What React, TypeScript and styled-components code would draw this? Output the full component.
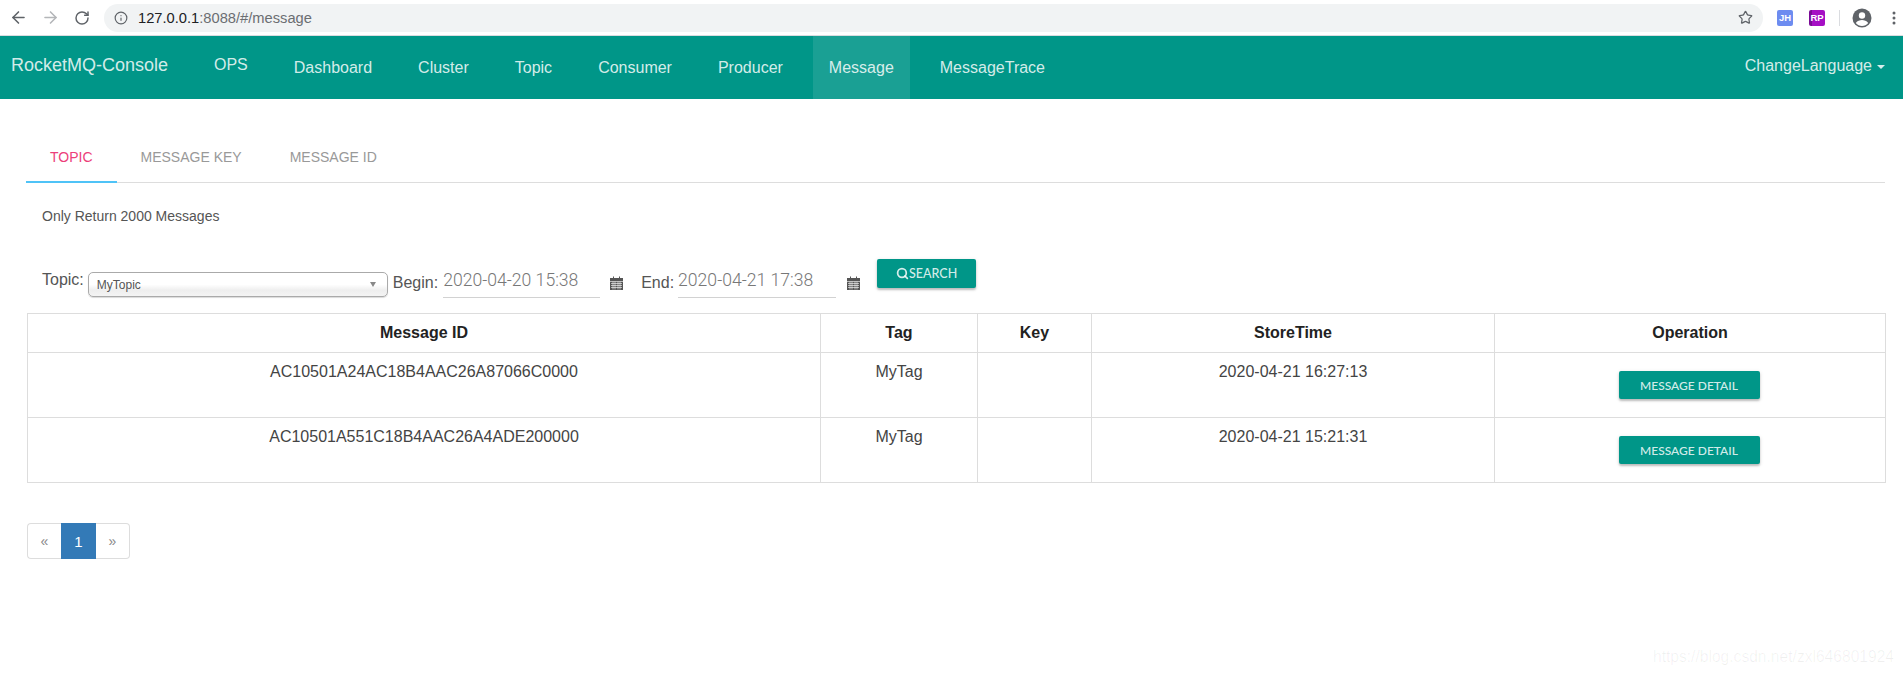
import React from 'react';
import styled, { createGlobalStyle } from 'styled-components';
import { ArrowLeft, ArrowRight, RotateCw, Info, Star, Search } from 'lucide-react';

const GlobalStyle = createGlobalStyle`
  html, body {
    margin: 0;
    padding: 0;
    background: #fff;
    font-family: "Liberation Sans", Arial, sans-serif;
    color: #333;
  }
  * { box-sizing: border-box; }
`;

const Page = styled.div`
  position: relative;
  width: 1903px;
  height: 675px;
  overflow: hidden;
  background: #fff;
`;

const BrowserBar = styled.div`
  display: flex;
  align-items: center;
  height: 36px;
  padding: 0 7px 0 2px;
  border-bottom: 1px solid #dadce0;
`;

const NavIcon = styled.span<{ $muted?: boolean }>`
  display: flex;
  width: 32px;
  justify-content: center;
  color: ${p => (p.$muted ? '#b4b6b9' : '#5f6368')};
`;

const Omnibox = styled.div`
  display: flex;
  align-items: center;
  flex: 1;
  height: 28px;
  margin: 0 14px 0 6px;
  padding: 0 10px;
  border-radius: 14px;
  background: #f1f3f4;
`;

const Url = styled.div`
  flex: 1;
  margin-left: 10px;
  font-size: 14.7px;
  color: #6b6e72;
`;

const UrlHost = styled.span`
  color: #202124;
`;

const Extension = styled.span<{ $bg: string; $gap: number }>`
  display: flex;
  align-items: center;
  justify-content: center;
  width: 16px;
  height: 16px;
  margin-right: ${p => p.$gap}px;
  border-radius: 2px;
  background: ${p => p.$bg};
  color: #fff;
  font-size: 9.5px;
  font-weight: bold;
`;

const BarDivider = styled.span`
  width: 1px;
  height: 16px;
  margin-right: 12px;
  background: #dadce0;
`;

const Avatar = styled.svg`
  display: block;
  margin-right: 20px;
`;

const Navbar = styled.nav`
  display: flex;
  align-items: stretch;
  height: 63px;
  padding-left: 11px;
  background: #009688;
  color: rgba(255, 255, 255, 0.84);
`;

const Brand = styled.div`
  display: flex;
  align-items: center;
  width: 187px;
  padding-bottom: 4px;
  font-size: 18px;
`;

const NavItem = styled.a<{ $active?: boolean; $raised?: boolean }>`
  display: flex;
  align-items: center;
  margin-right: 14px;
  padding: ${p => (p.$raised ? '0 16px 5px' : '0 16px')};
  background: ${p => (p.$active ? 'rgba(255,255,255,0.1)' : 'transparent')};
  font-size: 16px;
`;

const LangMenu = styled.div`
  display: flex;
  align-items: center;
  gap: 5px;
  margin-left: auto;
  padding: 0 18px 4px 0;
  font-size: 16px;
`;

const Caret = styled.span`
  width: 0;
  height: 0;
  margin-top: 2px;
  border-top: 4px solid rgba(255, 255, 255, 0.84);
  border-left: 4px solid transparent;
  border-right: 4px solid transparent;
`;

const Content = styled.main`
  padding: 34px 18px 0 26px;
`;

const Tabs = styled.div`
  display: flex;
  height: 50px;
  border-bottom: 1px solid #ddd;
`;

const Tab = styled.div<{ $active?: boolean }>`
  height: 50px;
  padding: 0 24px;
  line-height: 48px;
  font-size: 14px;
  color: ${p => (p.$active ? '#ec407a' : '#999')};
  border-bottom: 2px solid ${p => (p.$active ? '#4fc3f7' : 'transparent')};
`;

const Note = styled.p`
  margin: 25px 0 0 16px;
  font-size: 14px;
  line-height: 16px;
  color: #555;
`;

const FilterRow = styled.div`
  display: flex;
  align-items: flex-start;
  height: 53px;
  margin-top: 36px;
  padding-left: 16px;
`;

const FieldLabel = styled.span<{ $top: number; $left?: number; $right?: number }>`
  margin: ${p => p.$top}px ${p => p.$right ?? 4}px 0 ${p => p.$left ?? 0}px;
  font-size: 16px;
  line-height: 18px;
  color: #555;
`;

const SelectBox = styled.div`
  display: flex;
  align-items: center;
  justify-content: space-between;
  width: 300px;
  height: 25px;
  margin: 12px 5px 0 0;
  padding: 0 11px 0 8px;
  border: 1px solid #aaa;
  border-radius: 5px;
  background: linear-gradient(#fff 50%, #eee 75%, #f4f4f4);
  box-shadow: 0 1px 1px rgba(0, 0, 0, 0.15);
  font-size: 12px;
  color: #555;
`;

const SelectArrow = styled.span`
  width: 0;
  height: 0;
  border-top: 5px solid #888;
  border-left: 3.5px solid transparent;
  border-right: 3.5px solid transparent;
`;

const DateInput = styled.div<{ $width: number }>`
  width: ${p => p.$width}px;
  height: 33px;
  margin-top: 5px;
  padding-top: 5px;
  border-bottom: 1px solid #d2d2d2;
  font-family: Roboto, sans-serif;
  font-weight: 300;
  font-size: 17.6px;
  line-height: 20px;
  white-space: nowrap;
  color: #777;
`;

const CalendarIcon = styled.svg<{ $gap: number }>`
  display: block;
  flex: none;
  margin: 16px 0 0 ${p => p.$gap}px;
`;

const SearchButton = styled.button`
  display: flex;
  align-items: center;
  justify-content: center;
  width: 99px;
  height: 29px;
  margin: -1px 0 0 17px;
  padding: 0;
  border: 0;
  border-radius: 2px;
  background: #009688;
  color: rgba(255, 255, 255, 0.84);
  font-family: Lato, sans-serif;
  font-size: 12.5px;
  font-weight: 500;
  box-shadow: 0 2px 2px rgba(0, 0, 0, 0.2), 0 1px 4px rgba(0, 0, 0, 0.12);
`;

const Table = styled.table`
  width: 1859px;
  margin-left: 1px;
  border-collapse: collapse;
  table-layout: fixed;
  font-size: 16px;
`;

const Th = styled.th<{ $width?: number }>`
  width: ${p => (p.$width ? `${p.$width}px` : 'auto')};
  height: 39px;
  padding: 0;
  border: 1px solid #ddd;
  font-weight: bold;
  color: #222;
  text-align: center;
`;

const Td = styled.td`
  height: 65px;
  padding: 8px 8px 0;
  border: 1px solid #ddd;
  vertical-align: top;
  text-align: center;
  line-height: 22px;
  color: #444;
`;

const DetailButton = styled.button`
  display: block;
  width: 141px;
  height: 28px;
  margin: 10px auto 0;
  transform: translateX(-1px);
  padding: 0;
  border: 0;
  border-radius: 2px;
  background: #009688;
  color: rgba(255, 255, 255, 0.84);
  font-family: Lato, sans-serif;
  font-size: 12px;
  font-weight: 500;
  box-shadow: 0 2px 2px rgba(0, 0, 0, 0.2), 0 1px 4px rgba(0, 0, 0, 0.12);
`;

const Pager = styled.ul`
  display: inline-flex;
  margin: 40px 0 0 1px;
  padding: 0;
  list-style: none;
`;

const PageItem = styled.li<{ $active?: boolean; $pos?: 'first' | 'last' }>`
  display: flex;
  align-items: center;
  justify-content: center;
  width: ${p => (p.$active ? '35px' : '34px')};
  height: 36px;
  font-size: ${p => (p.$active ? '15px' : '14px')};
  color: ${p => (p.$active ? '#fff' : '#888')};
  background: ${p => (p.$active ? '#337ab7' : '#fff')};
  border: 1px solid ${p => (p.$active ? '#337ab7' : '#ddd')};
  border-left-width: ${p => (p.$pos === 'last' ? 0 : 1)}px;
  border-right-width: ${p => (p.$pos === 'first' ? 0 : 1)}px;
  border-radius: ${p => (p.$pos === 'first' ? '4px 0 0 4px' : p.$pos === 'last' ? '0 4px 4px 0' : '0')};
`;

const Watermark = styled.div`
  position: absolute;
  right: 9px;
  bottom: 9px;
  font-size: 15.6px;
  color: rgba(0, 0, 0, 0.06);
`;

const Calendar = ({ gap }: { gap: number }) => (
  <CalendarIcon $gap={gap} width="13" height="14" viewBox="0 0 13 14">
    <path fill="#555" d="M0 2h3V0.5h1V2h5V0.5h1V2h3v12H0z" />
    <path stroke="#fff" strokeWidth="0.6" d="M0 5.5h13M1 7.5h11M1 9.5h11M1 11.5h11M3 5.5v8M5 5.5v8M8 5.5v8M10 5.5v8" />
  </CalendarIcon>
);

const rows = [
  { id: 'AC10501A24AC18B4AAC26A87066C0000', time: '2020-04-21 16:27:13' },
  { id: 'AC10501A551C18B4AAC26A4ADE200000', time: '2020-04-21 15:21:31' },
];

const navItems = ['Dashboard', 'Cluster', 'Topic', 'Consumer', 'Producer', 'Message', 'MessageTrace'];

export default function App() {
  return (
    <Page>
      <GlobalStyle />
      <BrowserBar>
        <NavIcon><ArrowLeft size={19} strokeWidth={2} /></NavIcon>
        <NavIcon $muted><ArrowRight size={19} strokeWidth={2} /></NavIcon>
        <NavIcon><RotateCw size={16} strokeWidth={2.2} /></NavIcon>
        <Omnibox>
          <Info size={14} color="#5f6368" strokeWidth={2} />
          <Url><UrlHost>127.0.0.1</UrlHost>:8088/#/message</Url>
          <Star size={15} color="#5f6368" strokeWidth={2} />
        </Omnibox>
        <Extension $bg="#6d8cf0" $gap={16}>JH</Extension>
        <Extension $bg="linear-gradient(90deg, #7a0a96 3px, #a50fc4 3px)" $gap={14}>RP</Extension>
        <BarDivider />
        <Avatar width="20" height="20" viewBox="0 0 20 20">
          <circle cx="10" cy="10" r="9.5" fill="#5f6368" />
          <circle cx="10" cy="7.5" r="3.2" fill="#fff" />
          <path fill="#fff" d="M3.8 15c1.5-2.2 4-3 6.2-3s4.7.8 6.2 3c-1.5 1.9-3.7 3-6.2 3s-4.7-1.1-6.2-3z" />
        </Avatar>
        <svg width="4" height="14" viewBox="0 0 4 14">
          <circle cx="2" cy="2" r="1.5" fill="#5f6368" />
          <circle cx="2" cy="7" r="1.5" fill="#5f6368" />
          <circle cx="2" cy="12" r="1.5" fill="#5f6368" />
        </svg>
      </BrowserBar>

      <Navbar>
        <Brand>RocketMQ-Console</Brand>
        <NavItem $raised>OPS</NavItem>
        {navItems.map(item => (
          <NavItem key={item} $active={item === 'Message'}>{item}</NavItem>
        ))}
        <LangMenu>ChangeLanguage <Caret /></LangMenu>
      </Navbar>

      <Content>
        <Tabs>
          <Tab $active>TOPIC</Tab>
          <Tab>MESSAGE KEY</Tab>
          <Tab>MESSAGE ID</Tab>
        </Tabs>
        <Note>Only Return 2000 Messages</Note>

        <FilterRow>
          <FieldLabel $top={11}>Topic:</FieldLabel>
          <SelectBox>MyTopic<SelectArrow /></SelectBox>
          <FieldLabel $top={14} $right={5}>Begin:</FieldLabel>
          <DateInput $width={157}>2020-04-20 15:38</DateInput>
          <Calendar gap={10} />
          <FieldLabel $top={14} $left={18}>End:</FieldLabel>
          <DateInput $width={158}>2020-04-21 17:38</DateInput>
          <Calendar gap={11} />
          <SearchButton><Search size={13} strokeWidth={3.2} />SEARCH</SearchButton>
        </FilterRow>

        <Table>
          <thead>
            <tr>
              <Th $width={793}>Message ID</Th>
              <Th $width={157}>Tag</Th>
              <Th $width={114}>Key</Th>
              <Th $width={403}>StoreTime</Th>
              <Th>Operation</Th>
            </tr>
          </thead>
          <tbody>
            {rows.map(row => (
              <tr key={row.id}>
                <Td>{row.id}</Td>
                <Td>MyTag</Td>
                <Td />
                <Td>{row.time}</Td>
                <Td><DetailButton>MESSAGE DETAIL</DetailButton></Td>
              </tr>
            ))}
          </tbody>
        </Table>

        <Pager>
          <PageItem $pos="first">«</PageItem>
          <PageItem $active>1</PageItem>
          <PageItem $pos="last">»</PageItem>
        </Pager>
      </Content>
      <Watermark>https://blog.csdn.net/zxl646801924</Watermark>
    </Page>
  );
}
